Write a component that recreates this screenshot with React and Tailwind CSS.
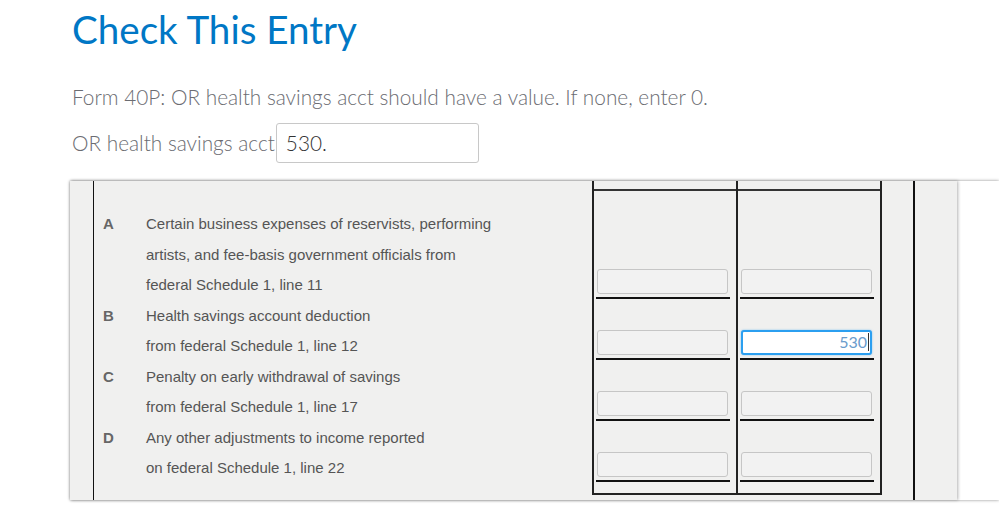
import React from 'react';

const rows = [
  { id: 'A', lines: ['Certain business expenses of reservists, performing', 'artists, and fee-basis government officials from', 'federal Schedule 1, line 11'], value: '' },
  { id: 'B', lines: ['Health savings account deduction', 'from federal Schedule 1, line 12'], value: '530', focused: true },
  { id: 'C', lines: ['Penalty on early withdrawal of savings', 'from federal Schedule 1, line 17'], value: '' },
  { id: 'D', lines: ['Any other adjustments to income reported', 'on federal Schedule 1, line 22'], value: '' },
];

function Cell({ height, focused, value }) {
  return (
    <div className="flex flex-col justify-end" style={{ height }}>
      {focused ? (
        <div className="ml-[3px] w-[131px] h-[25px] bg-white border-2 border-[#2b9ff0] rounded-[3px] shadow-[0_0_2px_rgba(43,159,240,0.6)] flex items-center justify-end pr-[1px] text-[16px] text-[#6a9ccc] font-['Lato',sans-serif]">
          {value}
          <span className="inline-block w-[1px] h-[18px] bg-[#333] ml-[1px]" />
        </div>
      ) : (
        <div className="ml-[3px] w-[131px] h-[25px] bg-[#f2f2f2] border border-[#c6c6c6] rounded-[3px]" />
      )}
      <div className="ml-[2px] w-[134px] h-[2px] bg-[#111] mt-[3px] mb-[2px]" />
    </div>
  );
}

function Column({ first }) {
  return (
    <div className={first ? 'w-[142px]' : 'w-[144px] border-l-2 border-[#222]'}>
      <div className="h-[10px] border-b-2 border-[#333]" />
      <div className="h-[18px]" />
      {rows.map((r) => (
        <Cell
          key={r.id}
          height={r.lines.length * 30.5}
          focused={!first && r.focused}
          value={r.value}
        />
      ))}
      <div className="h-[9.5px]" />
    </div>
  );
}

export default function App() {
  return (
    <div className="w-[999px] h-[523px] bg-white overflow-hidden">
      <h1 className="pl-[72px] pt-[4px] h-[58px] text-[38.6px] leading-[50px] text-[#0077c5] font-['Lato',sans-serif]">
        Check This Entry
      </h1>

      <p className="pl-[72px] mt-[25px] text-[20.8px] leading-[28px] text-[#6b6c72] font-['Lato',sans-serif] font-light">
        Form 40P: OR health savings acct should have a value. If none, enter 0.
      </p>

      <div className="pl-[72px] mt-[12px] flex items-center text-[20.8px] font-['Lato',sans-serif] font-light">
        <span className="text-[#6b6c72] mr-[1px]">OR health savings acct</span>
        <div className="w-[203px] h-[40px] border border-[#c8c8c8] rounded-[3px] flex items-center pl-[9px] text-[#333]">
          530.
        </div>
      </div>

      <div className="ml-[70px] mt-[18px] bg-white flex shadow-[0_0_3px_rgba(0,0,0,0.45)]">
        <div className="w-[887px] h-[319px] bg-[#f0f0ef] flex shadow-[1px_0_3px_rgba(0,0,0,0.3)]">
          <div className="w-[23px]" />
          <div className="w-[499px] border-l border-[#111] pt-[28px] font-['Liberation_Sans',Arial,sans-serif] text-[15px] leading-[30.5px] text-[#555]">
            {rows.map((r) => (
              <div key={r.id} className="flex">
                <div className="w-[52px] pl-[9px] font-bold text-[#666]">{r.id}</div>
                <div>
                  {r.lines.map((l) => (
                    <div key={l}>{l}</div>
                  ))}
                </div>
              </div>
            ))}
          </div>
          <div className="self-start flex border-x-2 border-b-2 border-[#222]">
            <Column first />
            <Column />
          </div>
          <div className="w-[31px]" />
          <div className="border-l-2 border-[#111] flex-1" />
        </div>
      </div>
    </div>
  );
}
